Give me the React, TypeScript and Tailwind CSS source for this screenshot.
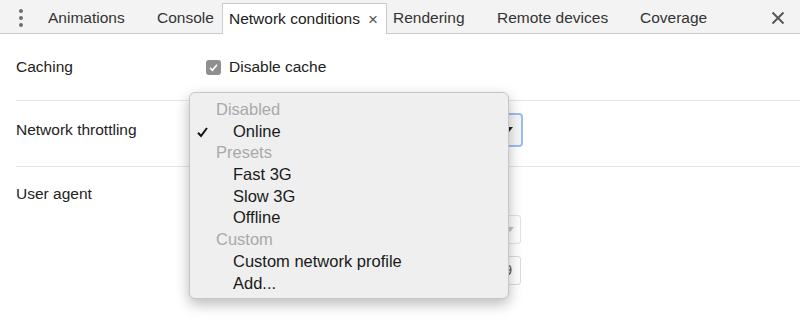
import React from "react";

const font = { fontFamily: '"Liberation Sans", Arial, Helvetica, sans-serif' };

export default function App() {
  const menu: { t: string; h?: boolean; c?: boolean }[] = [
    { t: "Disabled", h: true },
    { t: "Online", c: true },
    { t: "Presets", h: true },
    { t: "Fast 3G" },
    { t: "Slow 3G" },
    { t: "Offline" },
    { t: "Custom", h: true },
    { t: "Custom network profile" },
    { t: "Add..." },
  ];
  return (
    <div className="relative w-[800px] h-[326px] overflow-hidden bg-white text-[15.5px] text-[#222]" style={font}>
      {/* Tab bar */}
      <div className="flex h-[34px] items-stretch bg-[#f3f3f3] border-b border-[#cbcbcb]">
        <div className="w-[42px] flex items-center justify-center pt-[2px]">
          <div className="flex flex-col gap-[3px]">
            <div className="w-[4px] h-[4px] rounded-full bg-[#6e6e6e]" />
            <div className="w-[4px] h-[4px] rounded-full bg-[#6e6e6e]" />
            <div className="w-[4px] h-[4px] rounded-full bg-[#6e6e6e]" />
          </div>
        </div>
        <div className="w-[115px] pl-[6px] pt-[3px] flex items-center text-[#333]">Animations</div>
        <div className="w-[65px] pt-[3px] flex items-center text-[#333]">Console</div>
        <div className="w-[165px] mt-[3px] -mb-[1px] pl-[6px] flex items-center bg-white border border-b-0 border-[#cbcbcb] text-[#222]">
          <span>Network conditions</span>
          <span className="ml-[8px] text-[#555] text-[17px] leading-none">×</span>
        </div>
        <div className="w-[110px] pl-[6px] pt-[3px] flex items-center text-[#333]">Rendering</div>
        <div className="w-[143px] pt-[3px] flex items-center text-[#333]">Remote devices</div>
        <div className="flex-1 pt-[3px] flex items-center text-[#333]">Coverage</div>
        <div className="w-[44px] pt-[2px] flex items-center justify-center">
          <svg width="14" height="14" viewBox="0 0 14 14">
            <path d="M1.5 1.5 L12.5 12.5 M12.5 1.5 L1.5 12.5" stroke="#555" strokeWidth="1.9" />
          </svg>
        </div>
      </div>

      {/* Content */}
      <div className="pl-[16px]">
        <div className="h-[67px] flex items-center border-b border-[#e6e6e6]">
          <div className="w-[190px]">Caching</div>
          <div className="flex items-center">
            <div className="w-[15px] h-[15px] rounded-[3px] bg-[#8f8f8f] flex items-center justify-center">
              <svg width="11" height="11" viewBox="0 0 11 11">
                <path d="M2 5.8 L4.4 8.3 L9 2.7" stroke="#fff" strokeWidth="1.6" fill="none" />
              </svg>
            </div>
            <span className="ml-[8px]">Disable cache</span>
          </div>
        </div>
        <div className="h-[66px] pb-[8px] flex items-center border-b border-[#e6e6e6]">
          <div className="w-[190px]">Network throttling</div>
          <div className="w-[317px] h-[34px] rounded-[4px] border-2 border-[#9ebcf5] bg-[#f7f7f7] flex items-center justify-end pr-[8px]">
            <svg width="8" height="6" viewBox="0 0 8 6">
              <path d="M0 0 L8 0 L4 5 Z" fill="#222" />
            </svg>
          </div>
        </div>
        <div className="flex pt-[16px]">
          <div className="w-[190px] leading-[22px]">User agent</div>
          <div className="flex flex-col">
            <div className="h-[22px]" />
            <div className="mt-[10px] w-[315px] h-[29px] rounded-[3px] border border-[#e3e3e3] flex items-center justify-end pr-[6px]">
              <svg width="8" height="6" viewBox="0 0 8 6">
                <path d="M0 0 L8 0 L4 5 Z" fill="#c4c4c4" />
              </svg>
            </div>
            <div className="mt-[12px] w-[315px] h-[29px] rounded-[3px] border border-[#dcdcdc] flex items-center justify-end pr-[8px] text-[#555] text-[14px]">
              9
            </div>
          </div>
        </div>
      </div>

      {/* Dropdown menu */}
      <div className="absolute left-[189px] top-[92px] w-[320px] rounded-[6px] border border-[#c6c6c6] bg-[#efefef] pt-[6px] pb-[4px] text-[16.5px] shadow-[0_5px_14px_rgba(0,0,0,0.28)]">
        {menu.map((m) => (
          <div key={m.t} className="relative h-[21.7px] leading-[21.7px]">
            {m.c && (
              <svg className="absolute left-[7px] top-[6px]" width="11" height="11" viewBox="0 0 11 11">
                <path d="M1 5.8 L4 9 L10 1" stroke="#111" strokeWidth="2" fill="none" />
              </svg>
            )}
            <span className={m.h ? "pl-[26px] text-[#a9a9a9]" : "pl-[43px] text-[#1a1a1a]"}>{m.t}</span>
          </div>
        ))}
      </div>
    </div>
  );
}
